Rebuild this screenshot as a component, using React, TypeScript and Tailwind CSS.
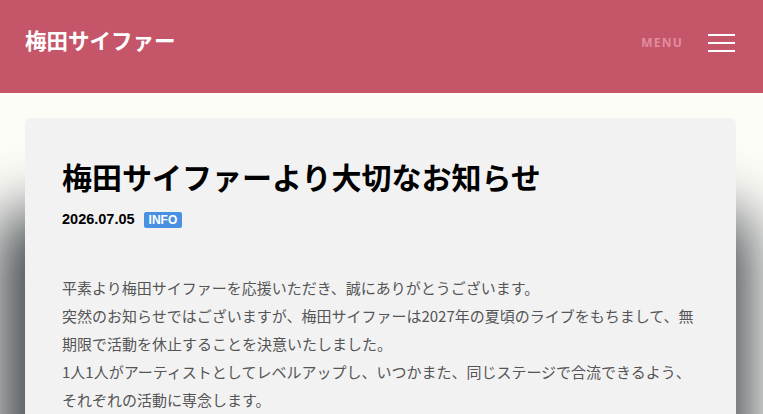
export default function App() {
  const jp = { fontFamily: '"Noto Sans CJK JP", "Noto Sans", sans-serif' };
  const latin = { fontFamily: '"Liberation Sans", Arial, sans-serif' };
  return (
    <div className="h-[414px] overflow-hidden bg-[#fdfdf8]" style={jp}>
      <header className="flex h-[93px] items-start justify-between bg-[#c5566a] pl-[25px] pr-[28px] pt-[26px]">
        <h1 className="text-[21.5px] font-bold leading-[28px] text-white">梅田サイファー</h1>
        <div className="flex items-center gap-[25px] pt-[8px]">
          <span
            className="text-[12px] font-bold tracking-[1.2px] text-[#e08d9d]"
            style={{ fontFamily: '"Open Sans", "Liberation Sans", sans-serif' }}
          >
            MENU
          </span>
          <div className="flex w-[27px] flex-col gap-[6px]">
            <span className="block h-[2px] bg-white" />
            <span className="block h-[2px] bg-white" />
            <span className="block h-[2px] bg-white" />
          </div>
        </div>
      </header>
      <main className="pl-[25px] pr-[27px] pt-[25px]">
        <article className="h-[600px] rounded-[6px] bg-[#f2f2f3] px-[37px] pt-[36px] shadow-[-6px_115px_60px_20px_rgba(52,58,64,0.95)]">
          <h2 className="text-[30px] font-bold leading-[45px] text-black">
            梅田サイファーより大切なお知らせ
          </h2>
          <div className="mt-[10px] flex items-center gap-[9px]">
            <span className="text-[14.5px] font-bold text-black" style={latin}>
              2026.07.05
            </span>
            <span
              className="rounded-[2px] bg-[#4a90e2] px-[5px] text-[12px] font-bold leading-[16px] text-white"
              style={latin}
            >
              INFO
            </span>
          </div>
          <p className="mt-[43px] text-[15px] leading-[28px] text-[#555]">
            平素より梅田サイファーを応援いただき、誠にありがとうございます。
            <br />
            突然のお知らせではございますが、梅田サイファーは2027年の夏頃のライブをもちまして、無
            <br />
            期限で活動を休止することを決意いたしました。
            <br />
            1人1人がアーティストとしてレベルアップし、いつかまた、同じステージで合流できるよう、
            <br />
            それぞれの活動に専念します。
          </p>
        </article>
      </main>
    </div>
  );
}
